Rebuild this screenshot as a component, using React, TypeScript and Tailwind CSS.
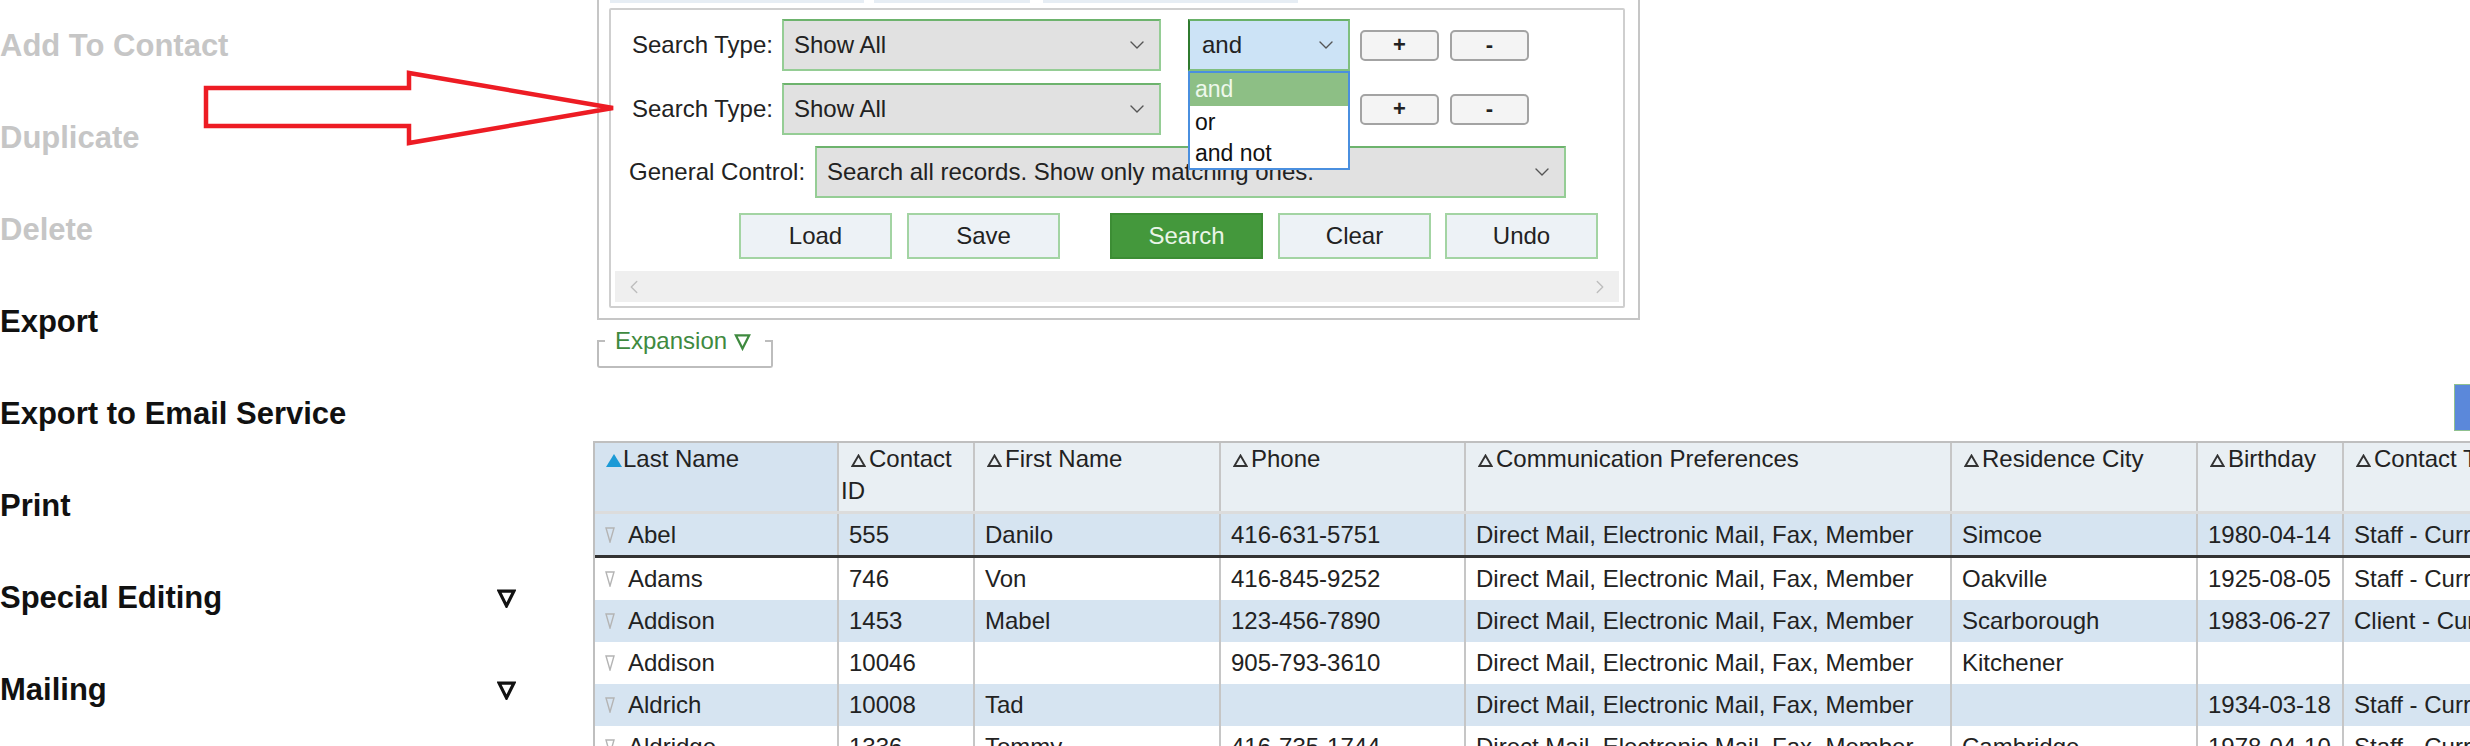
import React from 'react'
import { ChevronDown, ChevronLeft, ChevronRight } from 'lucide-react'

interface TSideItemT {
  label: string
  enabled: boolean
  caret?: boolean
}
const sideItems: Array<TSideItemT> = [
  { label: 'Add To Contact', enabled: false },
  { label: 'Duplicate', enabled: false },
  { label: 'Delete', enabled: false },
  { label: 'Export', enabled: true },
  { label: 'Export to Email Service', enabled: true },
  { label: 'Print', enabled: true },
  { label: 'Special Editing', enabled: true, caret: true },
  { label: 'Mailing', enabled: true, caret: true },
]

const columns = [
  { name: 'Last Name', w: 'w-[244px]' },
  { name: 'Contact ID', w: 'w-[136px]' },
  { name: 'First Name', w: 'w-[246px]' },
  { name: 'Phone', w: 'w-[245px]' },
  { name: 'Communication Preferences', w: 'w-[486px]' },
  { name: 'Residence City', w: 'w-[246px]' },
  { name: 'Birthday', w: 'w-[146px]' },
  { name: 'Contact Type', w: 'w-[300px]' },
]

const prefs = 'Direct Mail, Electronic Mail, Fax, Member'
const rows: Array<Array<string>> = [
  ['Abel', '555', 'Danilo', '416-631-5751', prefs, 'Simcoe', '1980-04-14', 'Staff - Current'],
  ['Adams', '746', 'Von', '416-845-9252', prefs, 'Oakville', '1925-08-05', 'Staff - Current'],
  ['Addison', '1453', 'Mabel', '123-456-7890', prefs, 'Scarborough', '1983-06-27', 'Client - Current'],
  ['Addison', '10046', '', '905-793-3610', prefs, 'Kitchener', '', ''],
  ['Aldrich', '10008', 'Tad', '', prefs, '', '1934-03-18', 'Staff - Current'],
  ['Aldridge', '1336', 'Tommy', '416-735-1744', prefs, 'Cambridge', '1978-04-10', 'Staff - Current'],
]

const DownTri = ({ className, stroke, sw }: { className: string; stroke: string; sw: number }) => (
  <svg viewBox="0 0 18 18" className={className} aria-hidden="true">
    <polygon points="2,2 16,2 9,16" fill="none" stroke={stroke} strokeWidth={sw} strokeLinejoin="miter" />
  </svg>
)

const Select = ({ text, w }: { text: string; w: string }) => (
  <div
    className={`${w} flex h-[52px] items-center justify-between border-2 border-[#95cd95] border-t-[#6db36d] bg-[#e1e1e1] pl-[10px] pr-[10px] text-[24px] text-[#222]`}
  >
    <span>{text}</span>
    <ChevronDown size={24} strokeWidth={1.4} color="#555" />
  </div>
)

const SmallBtn = ({ label }: { label: string }) => (
  <div className="flex h-[31px] w-[79px] items-center justify-center rounded-[5px] border-2 border-[#a3a3a3] bg-[#f4f4f4] text-[22px] font-bold leading-none text-[#222]">
    {label}
  </div>
)

const ActionBtn = ({ label, primary }: { label: string; primary?: boolean }) => (
  <div
    className={`${
      primary ? 'border-[#3c8d34] bg-[#44983c] text-[#eaf5e8]' : 'border-[#a3d4a3] bg-[#edf2f6] text-[#222]'
    } flex h-[46px] w-[153px] items-center justify-center border-2 text-[24px]`}
  >
    {label}
  </div>
)

const SearchRow = ({ withAnd }: { withAnd: boolean }) => (
  <div className="flex items-center pl-[21px]">
    <div className="w-[150px] text-[24px] text-[#222]">Search Type:</div>
    <Select text="Show All" w="w-[379px]" />
    <div className="relative ml-[27px] h-[52px] w-[162px]">
      {withAnd && (
        <>
          <div className="flex h-[52px] w-[162px] items-center justify-between border-2 border-[#7fbf7f] border-l-[#2f7a2f] border-t-[#69b169] bg-[#cce3f6] pl-[12px] pr-[10px] text-[24px] text-[#222]">
            <span>and</span>
            <ChevronDown size={24} strokeWidth={1.4} color="#555" />
          </div>
          <div className="absolute left-0 top-full z-10 w-[162px] border-2 border-[#4a8fdf] bg-white text-[23px] leading-[32px] text-[#111]">
            <div className="h-[33px] bg-[#8dbf85] pl-[5px] text-[#eef8ec]">and</div>
            <div className="h-[31px] pl-[5px]">or</div>
            <div className="h-[31px] pl-[5px]">and not</div>
          </div>
        </>
      )}
    </div>
    <div className="ml-[10px] flex gap-[11px]">
      <SmallBtn label="+" />
      <SmallBtn label="-" />
    </div>
  </div>
)

const SortTri = ({ active }: { active: boolean }) =>
  active ? (
    <svg viewBox="0 0 16 13" className="ml-[8px] mr-[1px] inline-block h-[13px] w-[16px] align-baseline" aria-hidden="true">
      <polygon points="8,0 16,13 0,13" fill="#1c9ad6" />
    </svg>
  ) : (
    <svg viewBox="0 0 15 13" className="ml-[10px] mr-[3px] inline-block h-[13px] w-[15px] align-baseline" aria-hidden="true">
      <polygon points="7.5,1.5 13.6,12 1.4,12" fill="none" stroke="#333" strokeWidth={1.9} />
    </svg>
  )

const App = () => {
  return (
    <div className="relative flex h-[746px] w-[2470px] overflow-hidden bg-white font-['Liberation_Sans',Arial,sans-serif]">
      {/* left action list */}
      <div className="w-[594px] shrink-0">
        {sideItems.map((item) => (
          <div
            key={item.label}
            className={`${
              item.enabled ? 'text-[#111]' : 'text-[#c6c6c6]'
            } flex h-[92px] w-[516px] items-center justify-between text-[31px] font-bold`}
          >
            <span>{item.label}</span>
            {item.caret && <DownTri className="h-[19px] w-[19px]" stroke="#111" sw={3} />}
          </div>
        ))}
      </div>

      {/* main area */}
      <div className="flex min-w-0 flex-1 flex-col">
        <div className="-mt-[10px] ml-[3px] h-[330px] w-[1043px] shrink-0 border-2 border-[#c6c6c6] px-[10px] pt-[8px]">
          <div className="flex h-[3px] gap-[10px] pl-[1px]">
            <div className="w-[254px] bg-[#e6edf4]" />
            <div className="w-[156px] bg-[#e6edf4]" />
            <div className="ml-[3px] w-[255px] bg-[#e6edf4]" />
          </div>
          <div className="mt-[5px] flex h-[300px] w-[1016px] flex-col rounded-[2px] border-2 border-[#cfcfcf]">
            <div className="mt-[9px]">
              <SearchRow withAnd={true} />
            </div>
            <div className="mt-[12px]">
              <SearchRow withAnd={false} />
            </div>
            <div className="mt-[11px] flex items-center pl-[18px]">
              <div className="w-[186px] text-[24px] text-[#222]">General Control:</div>
              <Select text="Search all records. Show only matching ones." w="w-[751px]" />
            </div>
            <div className="mt-[15px] flex pl-[128px]">
              <ActionBtn label="Load" />
              <div className="ml-[15px]">
                <ActionBtn label="Save" />
              </div>
              <div className="ml-[50px]">
                <ActionBtn label="Search" primary={true} />
              </div>
              <div className="ml-[15px]">
                <ActionBtn label="Clear" />
              </div>
              <div className="ml-[14px]">
                <ActionBtn label="Undo" />
              </div>
            </div>
            <div className="mx-[4px] mt-[12px] flex h-[31px] items-center justify-between bg-[#efefef] px-[8px]">
              <ChevronLeft size={22} strokeWidth={1.5} color="#bdbdbd" />
              <ChevronRight size={22} strokeWidth={1.5} color="#bdbdbd" />
            </div>
          </div>
        </div>

        {/* expansion tab */}
        <div className="relative ml-[3px] mt-[20px] h-[28px] w-[176px] shrink-0 rounded-b-[3px] border-x-2 border-b-2 border-[#bdbdbd]">
          <span className="absolute left-0 top-0 h-[2px] w-[6px] bg-[#bdbdbd]" />
          <span className="absolute right-0 top-0 h-[2px] w-[6px] bg-[#bdbdbd]" />
          <div className="-mt-[13px] flex items-center pl-[16px] text-[24px] leading-[28px] text-[#3f8a3f]">
            <span>Expansion</span>
            <DownTri className="ml-[7px] mt-[2px] h-[18px] w-[17px]" stroke="#3f8a3f" sw={2.4} />
          </div>
        </div>

        {/* toolbar */}
        <div className="mt-[16px] flex h-[47px] shrink-0 pl-[1860px]">
          <div className="h-[47px] w-[40px] shrink-0 border border-[#8fc08f] bg-[#5b88da]" />
        </div>

        {/* grid */}
        <div className="-ml-[1px] mt-[10px] flex flex-col border-l-2 border-t-2 border-[#bfbfbf]">
          <div className="flex h-[71px] border-b-[3px] border-[#dcdcdc]">
            {columns.map((c, i) => (
              <div
                key={c.name}
                className={`${c.w} ${
                  i === 0 ? 'bg-[#d5e3f0] pl-[3px]' : 'bg-[#e9eff3] pl-[2px]'
                } shrink-0 border-r-2 border-[#c6c6c6] pr-[6px] text-[24px] leading-[32px] text-[#222]`}
              >
                <SortTri active={i === 0} />
                {c.name}
              </div>
            ))}
          </div>
          {rows.map((r, ri) => (
            <div
              key={ri}
              className={`${ri % 2 === 0 ? 'bg-[#d6e4f1]' : 'bg-white'} ${
                ri === 0 ? 'h-[44px] border-b-[3px] border-[#333]' : 'h-[42px]'
              } flex shrink-0`}
            >
              {r.map((cell, ci) => (
                <div
                  key={ci}
                  className={`${columns[ci].w} flex shrink-0 items-center whitespace-nowrap border-r-2 border-[#c6c6c6] pl-[10px] text-[24px] text-[#222]`}
                >
                  {ci === 0 && (
                    <svg viewBox="0 0 10 16" className="mr-[13px] h-[16px] w-[10px] shrink-0" aria-hidden="true">
                      <polygon points="1,1 9,1 5,15" fill="none" stroke="#b4b4b4" strokeWidth={1.4} />
                    </svg>
                  )}
                  <span>{cell}</span>
                </div>
              ))}
            </div>
          ))}
        </div>
      </div>

      {/* annotation arrow */}
      <svg className="pointer-events-none absolute left-0 top-0 h-[746px] w-[2470px]" viewBox="0 0 2470 746" aria-hidden="true">
        <polygon
          points="206,88 409,88 409,73 613,108 409,143 409,126 206,126"
          fill="none"
          stroke="#ed1c24"
          strokeWidth={4.5}
          strokeLinejoin="miter"
        />
      </svg>
    </div>
  )
}

export default App
